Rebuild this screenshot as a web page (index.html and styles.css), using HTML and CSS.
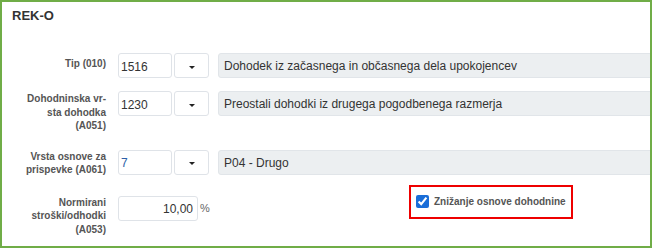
FILE: index.html
```html
<!DOCTYPE html>
<html lang="sl">
<head>
    <meta charset="UTF-8">
    <meta name="viewport" content="width=device-width, initial-scale=1.0">
    <title>REK-O</title>
    <link rel="stylesheet" href="styles.css">
</head>
<body>
    <div class="panel">
        <h2 class="panel-title">REK-O</h2>

        <div class="form">
            <div class="row">
                <label class="field-label">Tip (010)</label>
                <input type="text" class="code-input" value="1516">
                <button class="drop-btn"><span class="caret"></span></button>
                <div class="desc">Dohodek iz začasnega in občasnega dela upokojencev</div>
            </div>

            <div class="row row-income">
                <label class="field-label multi">Dohodninska vr-<br>sta dohodka<br>(A051)</label>
                <input type="text" class="code-input" value="1230">
                <button class="drop-btn"><span class="caret"></span></button>
                <div class="desc">Preostali dohodki iz drugega pogodbenega razmerja</div>
            </div>

            <div class="row row-basis">
                <label class="field-label multi tight">Vrsta osnove za<br>prispevke (A061)</label>
                <input type="text" class="code-input focused" value="7">
                <button class="drop-btn"><span class="caret"></span></button>
                <div class="desc">P04 - Drugo</div>
            </div>

            <div class="row row-costs">
                <label class="field-label multi tight">Normirani<br>stroški/odhodki<br>(A053)</label>
                <div class="amount-group">
                    <input type="text" class="amount-input" value="10,00">
                    <span class="unit">%</span>
                </div>
                <label class="check-box">
                    <input type="checkbox" checked>
                    <span>Znižanje osnove dohodnine</span>
                </label>
            </div>
        </div>
    </div>
</body>
</html>
```

FILE: styles.css
```css
* {
    box-sizing: border-box;
}

body {
    margin: 0;
    background: #ffffff;
    font-family: 'Liberation Sans', Arial, sans-serif;
}

.panel {
    width: 652px;
    height: 248px;
    border: 2px solid #70ad47;
    background: #ffffff;
    overflow: hidden;
}

.panel-title {
    margin: 0;
    padding: 6px 10px 0;
    font-size: 13px;
    line-height: 16px;
    font-weight: bold;
    color: #333333;
}

.form {
    padding-top: 29px;
}

.row {
    display: flex;
    align-items: flex-start;
}

.row > * {
    flex-shrink: 0;
}

.row-income {
    margin-top: 13px;
}

.row-basis {
    margin-top: 17px;
}

.row-costs {
    margin-top: 19px;
}

.field-label {
    flex: 0 0 104px;
    margin-right: 12px;
    padding-top: 4px;
    text-align: right;
    font-size: 10px;
    line-height: 13.5px;
    font-weight: bold;
    color: #555555;
}

.field-label.multi {
    padding-top: 1px;
}

.field-label.tight {
    padding-top: 0;
}

.code-input,
.amount-input {
    height: 25px;
    margin: 0;
    border: 1px solid #dfe3e8;
    border-radius: 3px;
    background: #ffffff;
    font-family: inherit;
    font-size: 12px;
    color: #333333;
    outline: none;
}

.code-input {
    width: 54px;
    padding: 2px 2px 0;
}

.code-input.focused {
    color: #2d5fa8;
}

.drop-btn {
    width: 35px;
    height: 25px;
    margin: 0 0 0 2px;
    padding: 0;
    border: 1px solid #dfe3e8;
    border-radius: 3px;
    background: #ffffff;
    display: flex;
    align-items: center;
    justify-content: center;
}

.caret {
    width: 0;
    height: 0;
    margin-top: 3px;
    border-left: 3px solid transparent;
    border-right: 3px solid transparent;
    border-top: 3px solid #222222;
}

.desc {
    width: 460px;
    height: 25px;
    margin-left: 9px;
    padding: 5px 5px 0;
    border: 1px solid #e1e5e9;
    border-radius: 3px;
    background: #eceff1;
    font-size: 12px;
    line-height: 14px;
    color: #333333;
    white-space: nowrap;
}

.amount-group {
    width: 291px;
    display: flex;
    align-items: center;
}

.amount-input {
    width: 80px;
    padding: 2px 4px 0;
    text-align: right;
}

.unit {
    margin-left: 2px;
    font-size: 11px;
    color: #666666;
}

.check-box {
    width: 164px;
    height: 34px;
    margin-top: -11px;
    padding-left: 5px;
    border: 2px solid #ee0000;
    display: flex;
    align-items: center;
    font-size: 10px;
    font-weight: bold;
    color: #555555;
}

.check-box input {
    width: 13px;
    height: 13px;
    margin: 0 5px 0 0;
    accent-color: #1a6ed8;
}
```
